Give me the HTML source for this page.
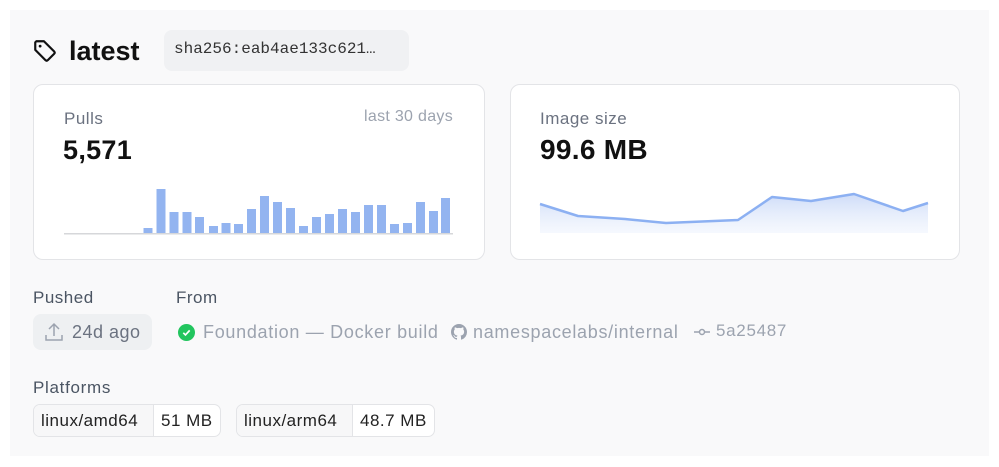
<!DOCTYPE html>
<html><head><meta charset="utf-8"><style>
*{margin:0;padding:0;box-sizing:border-box}
body{width:999px;height:467px;background:#fff;font-family:"Liberation Sans",sans-serif;position:relative;overflow:hidden}
.panel{position:absolute;left:10px;top:10px;width:979px;height:446px;background:#f9f9fa}
.a{position:absolute;white-space:nowrap}
.card{position:absolute;top:84px;height:176px;background:#fff;border:1px solid #e3e4e7;border-radius:10px}
.lbl{font-size:17px;color:#6b7280;letter-spacing:0.5px}
.big{font-size:27px;font-weight:bold;color:#111;letter-spacing:0.3px}
.g{color:#9ca3af;font-size:18px;letter-spacing:0.7px}
.chip{position:absolute;top:404px;height:33px;border:1px solid #e3e4e7;border-radius:7px;background:#fff;display:flex;font-size:17px;letter-spacing:0.5px;color:#222;overflow:hidden}
.chip span{padding:0 7px;line-height:31px}
.chip span:first-child{background:#f7f7f8;border-right:1px solid #e3e4e7}
</style></head><body>
<div class="panel"></div>
<svg class="a" style="left:32px;top:38px" width="26" height="26" viewBox="0 0 24 24" fill="none" stroke="#111" stroke-width="2" stroke-linejoin="round"><path d="M3 4v7l9.5 9.5a1.5 1.5 0 0 0 2 0l6-6a1.5 1.5 0 0 0 0-2L11 3H4z"/><circle cx="7.5" cy="7.5" r="1.3" fill="#111" stroke="none"/></svg>
<div class="a" style="left:69px;top:36px;font-size:27px;font-weight:bold;color:#111">latest</div>
<div class="a" style="left:164px;top:30px;width:245px;height:41px;background:#f0f1f3;border-radius:8px"></div>
<div class="a" style="left:174px;top:40px;font-family:'Liberation Mono',monospace;font-size:16px;color:#333">sha256:eab4ae133c621…</div>

<div class="card" style="left:33px;width:452px"></div>
<div class="a lbl" style="left:64px;top:109px">Pulls</div>
<div class="a" style="right:546px;top:108px;font-size:16px;letter-spacing:0.3px;color:#9ca3af">last 30 days</div>
<div class="a big" style="left:63px;top:135px">5,571</div>
<svg class="a" style="left:0;top:0" width="500" height="260">
<g fill="#93b4f0">
<rect x="143.5" y="228" width="9" height="5"/><rect x="156.5" y="189" width="9" height="44"/><rect x="169.5" y="212" width="9" height="21"/><rect x="182.5" y="212" width="9" height="21"/><rect x="195" y="217" width="9" height="16"/><rect x="209" y="226" width="9" height="7"/><rect x="221.5" y="223" width="9" height="10"/><rect x="234" y="224" width="9" height="9"/><rect x="247" y="209" width="9" height="24"/><rect x="260" y="196" width="9" height="37"/><rect x="273" y="202" width="9" height="31"/><rect x="286" y="208" width="9" height="25"/><rect x="299" y="226" width="9" height="7"/><rect x="312" y="217" width="9" height="16"/><rect x="325" y="214" width="9" height="19"/><rect x="338" y="209" width="9" height="24"/><rect x="351" y="212" width="9" height="21"/><rect x="364" y="205" width="9" height="28"/><rect x="377" y="205" width="9" height="28"/><rect x="390" y="224" width="9" height="9"/><rect x="403" y="223" width="9" height="10"/><rect x="416" y="202" width="9" height="31"/><rect x="429" y="211" width="9" height="22"/><rect x="441" y="198" width="9" height="35"/>
</g>
<rect x="64" y="233" width="389" height="1.5" fill="#d6d7da"/>
</svg>

<div class="card" style="left:510px;width:450px"></div>
<div class="a lbl" style="left:540px;top:109px">Image size</div>
<div class="a big" style="left:540px;top:134px;font-size:28px">99.6 MB</div>
<svg class="a" style="left:0;top:0" width="999" height="260">
<defs><linearGradient id="f" x1="0" y1="0" x2="0" y2="1"><stop offset="0" stop-color="#b9cdf5" stop-opacity=".7"/><stop offset="1" stop-color="#dfe8fb" stop-opacity=".3"/></linearGradient></defs>
<path d="M540 204L578 216L625 219L666 223L738 220L772 197L811 201L854 194L903 211L928 203L928 233L540 233Z" fill="url(#f)"/>
<path d="M540 204L578 216L625 219L666 223L738 220L772 197L811 201L854 194L903 211L928 203" fill="none" stroke="#8cb0f2" stroke-width="2.5" stroke-linejoin="round"/>
</svg>

<div class="a lbl" style="left:33px;top:288px;color:#4b5563">Pushed</div>
<div class="a lbl" style="left:176px;top:288px;color:#4b5563">From</div>
<div class="a" style="left:33px;top:314px;width:119px;height:36px;background:#eef0f2;border-radius:8px"></div>
<svg class="a" style="left:43px;top:321px" width="22" height="22" viewBox="0 0 22 22" fill="none" stroke="#9ca3af" stroke-width="1.5"><path d="M11 15V3M6 8l5-5 5 5M3 14v5h16v-5"/></svg>
<div class="a g" style="left:72px;top:322px;color:#6b7280;letter-spacing:0.5px">24d ago</div>
<svg class="a" style="left:178px;top:324px" width="17" height="17" viewBox="0 0 16 16"><circle cx="8" cy="8" r="8" fill="#22c55e"/><path d="M5 8.3l2 2 4-4.3" fill="none" stroke="#fff" stroke-width="1.6"/></svg>
<div class="a g" style="left:203px;top:322px">Foundation — Docker build</div>
<svg class="a" style="left:451px;top:324px" width="16" height="16" viewBox="0 0 16 16"><path fill="#9ca3af" d="M8 0C3.58 0 0 3.58 0 8c0 3.54 2.29 6.53 5.47 7.59.4.07.55-.17.55-.38v-1.33c-2.23.48-2.7-1.07-2.7-1.07-.36-.92-.89-1.17-.89-1.17-.73-.5.06-.49.06-.49.8.06 1.23.83 1.23.83.71 1.22 1.87.87 2.33.66.07-.52.28-.87.5-1.07-1.78-.2-3.64-.89-3.64-3.95 0-.87.31-1.59.82-2.15-.08-.2-.36-1.02.08-2.12 0 0 .67-.21 2.2.82.64-.18 1.32-.27 2-.27.68 0 1.36.09 2 .27 1.53-1.04 2.2-.82 2.2-.82.44 1.1.16 1.92.08 2.12.51.56.82 1.27.82 2.15 0 3.07-1.87 3.75-3.65 3.95.29.25.54.73.54 1.48v2.2c0 .21.15.46.55.38A8.013 8.013 0 0016 8c0-4.42-3.58-8-8-8z"/></svg>
<div class="a g" style="left:473px;top:322px">namespacelabs/internal</div>
<svg class="a" style="left:693px;top:325px" width="18" height="14" viewBox="0 0 18 14" fill="none" stroke="#9ca3af" stroke-width="1.5"><circle cx="9" cy="7" r="2.5"/><path d="M1 7h5.5M11.5 7H17"/></svg>
<div class="a g" style="left:716px;top:321px;font-size:17px">5a25487</div>

<div class="a lbl" style="left:33px;top:378px;color:#4b5563;letter-spacing:0.7px">Platforms</div>
<div class="chip" style="left:33px"><span style="width:120px">linux/amd64</span><span>51 MB</span></div>
<div class="chip" style="left:236px"><span style="width:116px">linux/arm64</span><span>48.7 MB</span></div>
</body></html>
